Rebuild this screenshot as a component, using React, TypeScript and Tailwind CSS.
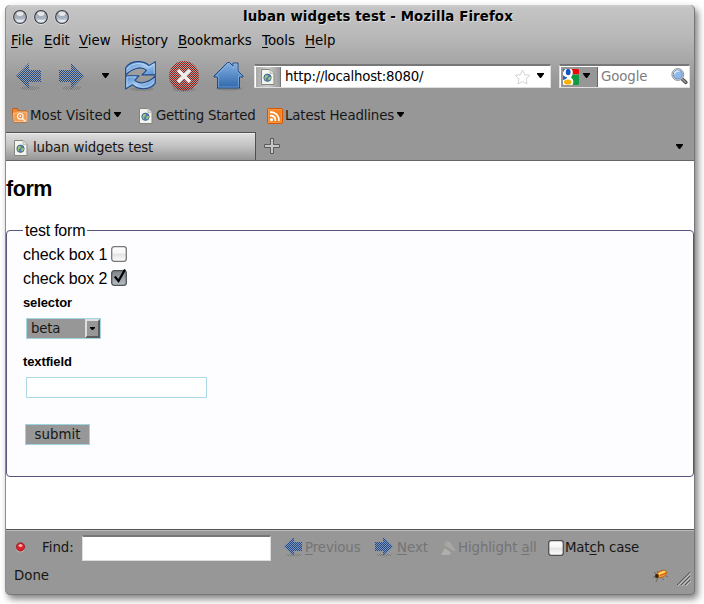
import type { ReactNode } from "react";

const ui = "font-['DejaVu_Sans',sans-serif] text-[13.33px] leading-[16px]";
const page = "font-['Liberation_Sans',Arial,sans-serif]";

function Defs() {
  return (
    <svg className="absolute h-0 w-0">
      <defs>
        <pattern id="ck" width="2" height="2" patternUnits="userSpaceOnUse" shapeRendering="crispEdges">
          <rect width="1" height="1" fill="#234a84" />
          <rect x="1" y="1" width="1" height="1" fill="#234a84" />
        </pattern>
        <pattern id="ckg" width="2" height="2" patternUnits="userSpaceOnUse" shapeRendering="crispEdges">
          <rect width="1" height="1" fill="#7c7c7c" />
          <rect x="1" y="1" width="1" height="1" fill="#7c7c7c" />
        </pattern>
        <pattern id="ckr" width="2" height="2" patternUnits="userSpaceOnUse" shapeRendering="crispEdges">
          <rect x="1" width="1" height="1" fill="#9c1d16" />
          <rect y="1" width="1" height="1" fill="#9c1d16" />
        </pattern>
        <linearGradient id="blue" x1="0" y1="0" x2="0" y2="1">
          <stop offset="0" stopColor="#83b0e2" />
          <stop offset="1" stopColor="#3067ab" />
        </linearGradient>
        <linearGradient id="reloadFill" x1="0" y1="0" x2="1" y2="1">
          <stop offset="0" stopColor="#4b87cb" />
          <stop offset=".5" stopColor="#a3c6ec" />
          <stop offset="1" stopColor="#4d8bd0" />
        </linearGradient>
        <linearGradient id="ball" x1="0" y1="0" x2="0" y2="1">
          <stop offset="0" stopColor="#6d7178" />
          <stop offset=".35" stopColor="#a3aab4" />
          <stop offset=".6" stopColor="#aab3c1" />
          <stop offset="1" stopColor="#f3f7ff" />
        </linearGradient>
      </defs>
    </svg>
  );
}

function Ball() {
  return (
    <svg className="h-[16px] w-[16px]" viewBox="0 0 16 16">
      <circle cx="8" cy="8.500" r="7" fill="none" stroke="#dedede" strokeWidth="1" />
      <circle cx="8" cy="8" r="6.400" fill="url(#ball)" stroke="#3b3e44" strokeWidth="1.100" />
      <ellipse cx="8" cy="4.600" rx="3.600" ry="2.300" fill="#fff" opacity=".75" />
      <path d="M3.400 9.500a5 5 0 0 0 9.200 0c-2 2-7.200 2-9.200 0Z" fill="#fff" opacity=".6" />
    </svg>
  );
}

function Tri({ className = "" }: { className?: string }) {
  return (
    <svg className={"h-[5px] w-[7px] shrink-0 " + className} viewBox="0 0 7 5">
      <path d="M0 0h7v1L4 5H3L0 1Z" fill="#000" />
    </svg>
  );
}

function NavArrow({ right = false }: { right?: boolean }) {
  const shape = right ? "M26 13 13 0v7H1v12h12v7Z" : "M0 13 13 0v7h12v12H13v7Z";
  return (
    <svg className="h-[28px] w-[26px] shrink-0" viewBox="0 0 26 28">
      <ellipse cx="14" cy="25" rx="10" ry="2" fill="url(#ckg)" />
      <path d={shape} fill="#a5adb8" opacity=".2" />
      <path d={shape} fill="url(#ck)" />
    </svg>
  );
}

function SmallArrow({ right = false }: { right?: boolean }) {
  return (
    <svg className="h-[20px] w-[19px] shrink-0" viewBox="0 0 19 20">
      <ellipse cx="10" cy="18" rx="8" ry="1.500" fill="url(#ckg)" />
      <g transform={right ? "translate(19 0) scale(-1 1)" : undefined}>
        <path d="M0 9.500 10 0v5h8v9h-8v5Z" fill="#6f93c6" opacity=".7" />
        <path d="M0 9.500 10 0v5h8v9h-8v5Z" fill="url(#ck)" />
      </g>
    </svg>
  );
}

function Reload() {
  return (
    <svg className="h-[31px] w-[32px] shrink-0" viewBox="0 0 32 31">
      <ellipse cx="17" cy="28" rx="12" ry="2" fill="#777" opacity=".5" />
      <g fill="url(#reloadFill)" stroke="#204a87" strokeWidth="1.100" strokeLinejoin="round">
        <path d="M.6 14V7C3 3 7 .8 12.500.6c5-.2 8.500 1 11.500 4l6.300-4v13.300H17l4.500-4.500C18.500 7 14.500 6.500 11.500 7.500 7.500 8.500 4 10.500.6 14Z" />
        <path d="M30.300 15v7c-2 3.500-5.500 5.500-11.300 5.700-5 .2-8.500-1-11.500-4L.6 28V14.800H14l-4.200 4.500c3 2.500 7 3 10 2 4-1 7.200-2.800 10.500-6.300Z" />
      </g>
      <path d="M2 8c5-6 14-8 22-1.500L29.200 3v9.800" fill="none" stroke="#c9e0f7" strokeWidth=".8" />
      <path d="M2 25.500V16h9M29 21c-5 6-14 7.500-21 1" fill="none" stroke="#c2daf4" strokeWidth=".8" />
    </svg>
  );
}

function Stop() {
  return (
    <svg className="h-[32px] w-[30px] shrink-0" viewBox="0 0 30 32">
      <ellipse cx="15" cy="28.500" rx="12" ry="2.500" fill="url(#ckg)" />
      <circle cx="15" cy="15" r="15" fill="#a5a09f" opacity=".3" />
      <circle cx="15" cy="15" r="15" fill="url(#ckr)" />
      <path d="m9 9 12 12M21 9 9 21" stroke="#eee" strokeWidth="3.600" />
    </svg>
  );
}

function Home() {
  return (
    <svg className="h-[30px] w-[31px] shrink-0" viewBox="0 0 31 30">
      <ellipse cx="16" cy="27.500" rx="13" ry="2" fill="#777" opacity=".6" />
      <path d="M1 15 14.500 1.500h2L20 5V2h5v8l5 5v1h-3.500v11h-22V16H1Z" fill="url(#blue)" stroke="#204a87" strokeLinejoin="round" />
      <path d="M3 15 15.500 2.800 21 8V3h3v7.500l4.500 4.500h-3v11h-20V15Z" fill="none" stroke="#8fb7e3" strokeWidth=".6" />
    </svg>
  );
}

function PageIcon() {
  return (
    <svg className="h-[16px] w-[14px] shrink-0" viewBox="0 0 14 16">
      <path d="M.5.500h8.500l4 4v11H.500Z" fill="#f4f4ef" stroke="#85877f" />
      <path d="M9 .500v4h4" fill="#ddd" stroke="#aaa" strokeWidth=".7" />
      <circle cx="6.500" cy="8.700" r="3.700" fill="#4f80b4" stroke="#33597e" strokeWidth=".7" />
      <path d="M4 6.500 7 6l-.5 2L4.500 9.500 5.500 12 3.500 10ZM8 8l2 .3-.5 2L8 11.500 7 10Z" fill="#a7c66e" />
    </svg>
  );
}

function FolderIcon() {
  return (
    <svg className="h-[15px] w-[16px] shrink-0" viewBox="0 0 16 15">
      <path d="M.5 1.500.9.600h4.500l.8 2.400H15v11H1.500Z" fill="#f08a32" stroke="#c7590b" />
      <path d="M1.500 5h3l1-1h9.500v9.500H2Z" fill="#f59a4c" stroke="#f9d8b5" strokeWidth=".7" />
      <circle cx="8.300" cy="8.300" r="2.800" fill="#f28b35" stroke="#fff" strokeWidth="1.100" />
      <path d="m10.500 10.500 2.500 2.500" stroke="#fff" strokeWidth="1.300" />
      <circle cx="8.300" cy="8.300" r="1" fill="#fff" />
    </svg>
  );
}

function RssIcon() {
  return (
    <svg className="h-[16px] w-[16px] shrink-0" viewBox="0 0 16 16">
      <rect x=".5" y=".5" width="15" height="15" rx="1.500" fill="#f5821f" stroke="#d45500" />
      <rect x="1.500" y="1.500" width="13" height="13" fill="none" stroke="#ffb066" strokeWidth=".5" />
      <circle cx="4.500" cy="11.700" r="1.600" fill="#fff" />
      <path d="M3 7.500c3.300 0 5.500 2.200 5.500 5.500M3 4c5.500 0 9 3.500 9 9" fill="none" stroke="#fff" strokeWidth="1.800" />
    </svg>
  );
}

function GoogleIcon() {
  return (
    <svg className="h-[16px] w-[16px] shrink-0" viewBox="0 0 16 16">
      <rect width="16" height="16" rx="1.500" fill="#fff" />
      <path d="M8.500 0H15a1 1 0 0 1 1 1v4.500h-6.500C10.200 3.500 9.800 1.500 8.500 0Z" fill="#e60909" />
      <path d="M9.500 5.500H16V15a1 1 0 0 1-1 1H9.500c1.500-3 1-5.500-1.500-7.500Z" fill="#109a43" />
      <path d="M0 6c1.200 1.500 2.500 2 4.200 2-.2 1.500-1.700 2.500-4.200 3Z" fill="#2a60c8" />
      <path d="M0 0h2.500C1.300 1 .6 2 0 3.500Z" fill="#2a60c8" />
      <ellipse cx="5.200" cy="3" rx="2.400" ry="3.200" fill="#1755c4" />
      <ellipse cx="4.800" cy="13" rx="3.800" ry="2.600" fill="#f7b10a" />
    </svg>
  );
}

function Magnifier() {
  return (
    <svg className="h-[17px] w-[17px] shrink-0" viewBox="0 0 17 17">
      <path d="m10 10 4.800 4.300" stroke="#555" strokeWidth="3.600" strokeLinecap="round" />
      <path d="m11 11 3.600 3.200" stroke="#999" strokeWidth="1.400" strokeLinecap="round" />
      <circle cx="6.800" cy="6.500" r="5.900" fill="#eee" stroke="#8b8b8b" />
      <circle cx="6.800" cy="6.500" r="4.500" fill="#8fb9ea" stroke="#5e8cc4" />
      <path d="M3.500 6.500a3.300 3.300 0 0 1 5-3" fill="none" stroke="#d7e9fb" strokeWidth="1.500" />
    </svg>
  );
}

function Star() {
  return (
    <svg className="h-[16px] w-[17px] shrink-0" viewBox="0 0 17 16">
      <path d="m8.500 1 2.200 4.700 5.100.6-3.700 3.600.9 5.100-4.500-2.500L4 15l.9-5.100L1.200 6.300l5.100-.6Z" fill="#fff" stroke="#d2d2d2" strokeLinejoin="round" />
    </svg>
  );
}

function Plus() {
  return (
    <svg className="h-[16px] w-[16px]" viewBox="0 0 16 16">
      <path d="M6.500.500h3v6h6v3h-6v6h-3v-6h-6v-3h6Z" fill="#c6c6c6" stroke="#5b5b5b" />
    </svg>
  );
}

function Highlighter() {
  return (
    <svg className="h-[16px] w-[16px] shrink-0" viewBox="0 0 16 16">
      <path d="M3 4 5 1l4 1 5 8-3 3-6-4Z" fill="#a5a4a1" />
      <path d="m4 8 6 5-2 2H0Z" fill="#b0b0aa" />
      <path d="m4 7 8 5" stroke="#858581" />
      <path d="m7 3 7 7" stroke="#b0b0b0" />
    </svg>
  );
}

function Check({ on = false, dark = false }: { on?: boolean; dark?: boolean }) {
  return (
    <svg className="h-[17px] w-[17px] shrink-0" viewBox="0 0 17 17">
      <defs>
        <linearGradient id="boxOff" x1="0" y1="0" x2="0" y2="1">
          <stop offset="0" stopColor="#fff" />
          <stop offset=".45" stopColor="#f5f5f5" />
          <stop offset=".5" stopColor="#e3e3e3" />
          <stop offset="1" stopColor="#fdfdfd" />
        </linearGradient>
        <linearGradient id="boxOn" x1="0" y1="0" x2="0" y2="1">
          <stop offset="0" stopColor="#7e858a" />
          <stop offset="1" stopColor="#b5bcc2" />
        </linearGradient>
      </defs>
      <rect x=".7" y="1.700" width="14.600" height="14.600" rx="2.500" fill={on ? "url(#boxOn)" : "url(#boxOff)"} stroke={on ? "#4e5356" : dark ? "#505050" : "#777"} strokeWidth="1.300" />
      {on && <path d="M3.800 7.500 7.500 12 14 .500" fill="none" stroke="#000" strokeWidth="2.200" />}
    </svg>
  );
}

function Bug() {
  return (
    <svg className="h-[14px] w-[17px]" viewBox="0 0 17 14">
      <path d="m2 3 4 4M1 8h5l-2 5M14 7l2 1M10 9l2 2M5 2l2 3" stroke="#5b5145" strokeWidth=".7" fill="none" />
      <ellipse cx="9.500" cy="5" rx="5.600" ry="3.300" transform="rotate(-23 9.500 5)" fill="#f29a23" stroke="#a95010" strokeWidth=".6" />
      <circle cx="4.900" cy="7" r="1.900" fill="#38200e" />
      <path d="m7 5 6-2.500" stroke="#ffe37b" strokeWidth="1.700" />
      <path d="m8 6.500 6-2.500" stroke="#d3531b" />
    </svg>
  );
}

function Menu({ className, children }: { className: string; children: ReactNode }) {
  return <span className={"shrink-0 " + className}>{children}</span>;
}

const key = "underline decoration-1 underline-offset-2";

export default function App() {
  return (
    <div className={"h-[604px] w-[704px] overflow-hidden bg-white pl-[5px] pt-[5px] text-black whitespace-nowrap " + ui}>
      <Defs />
      <div className="flex h-[590px] w-[690px] flex-col overflow-hidden rounded-[5px] border-x border-b border-[#777] border-l-[#8d8d8d] bg-[#979797] bg-[linear-gradient(#d0d0d0_0,#c4c4c4_3px,#b9b9b9_30px,#979797_78px)] shadow-[3px_4px_7px_rgba(0,0,0,0.5)]">
        <header className="flex h-[23px] shrink-0 items-center pl-[6px]">
          <div className="flex gap-[5px]"><Ball /><Ball /><Ball /></div>
          <h1 className="ml-[173px] w-[272px] text-[13.33px] font-bold tracking-[0.12px] [text-shadow:1px_1px_0_#ddd]">luban widgets test - Mozilla Firefox</h1>
        </header>
        <nav className="flex h-[26px] shrink-0 items-center pl-[5px]">
          <Menu className="w-[33px]"><span className={key}>F</span>ile</Menu>
          <Menu className="w-[35px]"><span className={key}>E</span>dit</Menu>
          <Menu className="w-[42px]"><span className={key}>V</span>iew</Menu>
          <Menu className="w-[57px] tracking-[-0.05px]">Hi<span className={key}>s</span>tory</Menu>
          <Menu className="w-[84px] tracking-[-0.1px]"><span className={key}>B</span>ookmarks</Menu>
          <Menu className="w-[43px]"><span className={key}>T</span>ools</Menu>
          <Menu className="w-[40px]"><span className={key}>H</span>elp</Menu>
        </nav>
        <div className="flex h-[45px] shrink-0 items-start pl-[10px]">
          <div className="mt-[9px]"><NavArrow /></div>
          <div className="ml-[16px] mt-[9px]"><NavArrow right /></div>
          <Tri className="ml-[18px] mt-[19px]" />
          <div className="ml-[16px] mt-[7px]"><Reload /></div>
          <div className="ml-[12px] mt-[7px]"><Stop /></div>
          <div className="ml-[14px] mt-[7px]"><Home /></div>
          <div className="ml-[10px] mt-[10px] flex h-[24px] w-[297px] shrink-0 items-center border border-t-2 border-[#dedede] border-t-[#777] bg-white">
            <span className="ml-px flex h-[20px] w-[25px] items-center justify-center border-r border-[#777] bg-[linear-gradient(90deg,#aaa,#ccc_50%,#999)]"><PageIcon /></span>
            <span className="ml-[4px] w-[225px] tracking-[-0.24px]">http://localhost:8080/</span>
            <span className="ml-[4px]"><Star /></span>
            <Tri className="ml-[6px] mb-[2px]" />
          </div>
          <div className="ml-[8px] mt-[10px] flex h-[24px] w-[131px] shrink-0 items-center border border-t-2 border-[#dedede] border-t-[#777] bg-white">
            <span className="ml-px flex h-[20px] w-[37px] items-center border-r border-[#666] bg-[#979797] pl-[2px]"><GoogleIcon /><Tri className="ml-[4px] mb-[2px]" /></span>
            <span className="ml-[3px] w-[70px] tracking-[-0.1px] text-[#7e7e7e]">Google</span>
            <Magnifier />
          </div>
        </div>
        <div className="flex h-[33px] shrink-0 items-center pl-[6px] text-[#161616]">
          <FolderIcon /><span className="ml-[2px] w-[84px]">Most Visited</span><Tri className="mb-[2px]" />
          <span className="ml-[18px]"><PageIcon /></span><span className="ml-[3px] w-[111px] tracking-[-0.24px]">Getting Started</span>
          <RssIcon /><span className="ml-[2px] w-[112px] tracking-[-0.14px]">Latest Headlines</span><Tri className="mb-[2px]" />
        </div>
        <div className="flex h-[29px] shrink-0 border-b border-[#666]">
          <div className="flex h-[28px] w-[250px] items-center border-r border-t border-[#505050] bg-[linear-gradient(#dedede,#c4c4c4_45%,#969696)] pl-[8px] pt-[2px] text-[#161616] shadow-[inset_0_1px_#eee]">
            <PageIcon /><span className="ml-[5px] tracking-[-0.17px]">luban widgets test</span>
          </div>
          <div className="ml-[8px] mt-[6px] w-[16px]"><Plus /></div>
          <Tri className="ml-[396px] mt-[12px]" />
        </div>
        <main className={"h-[368px] shrink-0 bg-white text-black " + page}>
          <h2 className="h-[59px] pt-[16px] text-[21.5px] font-bold leading-[24px] tracking-[-0.45px]">form</h2>
          <fieldset className="h-[257px] rounded-[4px] border border-[#56567b] bg-[#fdfdff] pl-[16px] text-[16px] leading-[20px]">
            <legend className="h-[20px] px-[2px] pt-px tracking-[-0.22px]">test form</legend>
            <label className="mt-px flex h-[24px] items-center"><span className="w-[88px] pt-[3px] tracking-[-0.1px]">check box 1</span><Check /></label>
            <label className="flex h-[24px] items-center"><span className="w-[88px] pt-[3px] tracking-[-0.1px]">check box 2</span><Check on /></label>
            <div className="h-[29px] pt-[4px] text-[13px] font-bold leading-[20px] tracking-[-0.12px]">selector</div>
            <div className={"ml-[3px] flex h-[21px] w-[75px] items-center border border-[#a4d5e0] bg-[#979797] pl-[4px] text-[#161616] " + ui}>
              <span className="w-[54px] shrink-0 tracking-[-0.2px]">beta</span>
              <span className="flex h-[19px] w-[15px] shrink-0 items-center justify-center border-2 border-b-[#5d5d5d] border-l-[#ddd] border-r-[#5d5d5d] border-t-[#ddd]">
                <svg className="h-[3px] w-[5px]" viewBox="0 0 5 3"><path d="M0 0h5v1L3 3H2L0 1Z" /></svg>
              </span>
            </div>
            <div className="mt-[13px] h-[25px] text-[13px] font-bold leading-[20px] tracking-[-0.12px]">textfield</div>
            <input aria-label="textfield" className="ml-[3px] block h-[21px] w-[181px] border border-[#add8e6] bg-white" />
            <button className={"ml-[2px] mt-[26px] block h-[21px] w-[65px] border border-[#9bd3e0] bg-[#979797] text-[#161616] " + ui}>submit</button>
          </fieldset>
        </main>
        <div className="flex h-[36px] shrink-0 items-center border-t border-[#555] pl-[10px] text-[#161616] shadow-[inset_0_1px_#bbb]">
          <svg className="h-[11px] w-[10px]" viewBox="0 0 10 11"><circle cx="4.500" cy="6" r="4.300" fill="#ddd" /><circle cx="4.500" cy="5" r="4.200" fill="#da2028" stroke="#7c171b" strokeWidth=".7" /><ellipse cx="4.500" cy="3.500" rx="2" ry="1.500" fill="#ffaaad" /></svg>
          <span className="ml-[16px] w-[40px]">Find:</span>
          <input aria-label="Find" className="h-[26px] w-[189px] border border-t-2 border-[#ddd] border-t-[#777] bg-white" />
          <span className="ml-[13px] mt-[7px] self-start"><SmallArrow /></span><span className="ml-[2px] w-[70px] tracking-[-0.1px] text-[#747474]"><span className={key}>P</span>revious</span>
          <span className="-ml-px mt-[7px] self-start"><SmallArrow right /></span><span className="ml-[4px] w-[44px] text-[#747474]"><span className={key}>N</span>ext</span>
          <Highlighter /><span className="ml-px w-[90px] tracking-[-0.1px] text-[#747474]">Highlight <span className={key}>a</span>ll</span>
          <Check dark /><span className="tracking-[-0.15px]">Mat<span className={key}>c</span>h case</span>
        </div>
        <footer className="flex h-[28px] shrink-0 items-start pl-[8px] pt-[2px] text-[#161616]">
          <span className="w-[638px] pt-px">Done</span>
          <span className="mt-[2px]"><Bug /></span>
          <svg className="ml-[8px] mt-[5px] h-[14px] w-[14px]" viewBox="0 0 14 14"><path d="M0 13 13 0M4 13l9-9M8 13l5-5" stroke="#555" /><path d="M1 14 14 1M5 14l9-9M9 14l5-5" stroke="#ccc" strokeWidth=".8" /></svg>
        </footer>
      </div>
    </div>
  );
}
